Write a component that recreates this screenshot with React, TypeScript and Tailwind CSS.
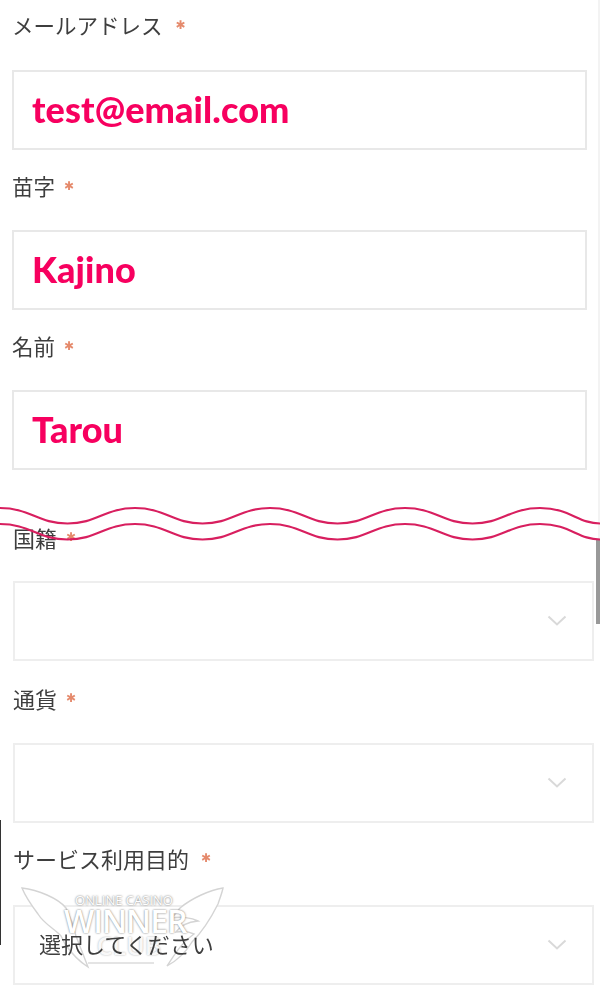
import React from "react";

const sans = "font-['Noto_Sans_CJK_JP','Noto_Sans',sans-serif]";

function Label({ text, box, gap, size }: { text: string; box: string; gap: string; size: string }) {
  return (
    <div className={box}>
      <div className={`flex items-center h-[32px] ${size} leading-[32px] text-[#3e3e3e] blur-[0.4px] ${gap}`}>
        <span>{text}</span>
        <span className="font-['DejaVu_Sans',sans-serif] text-[12px] leading-none font-bold text-[#e58a6c] blur-[0.3px]">✱</span>
      </div>
    </div>
  );
}

function TextBox({ value }: { value: string }) {
  return (
    <div className="h-[80px] border-2 border-[#e8e8e8] bg-white pl-[18px] pb-[2px] flex items-center">
      <span className="font-['Lato',sans-serif] text-[36px] font-black tracking-[0.1px] text-[#f7005f] blur-[0.3px]">{value}</span>
    </div>
  );
}

function SelectBox({ value }: { value?: string }) {
  return (
    <div className="relative h-[80px] border-2 border-[#eeeeee] bg-white pl-[24px] pr-[25px] flex items-center justify-between">
      <span className="relative z-10 -top-[2px] text-[22px] text-[#3e3e3e] blur-[0.4px]">{value}</span>
      <svg width="20" height="12" viewBox="0 0 20 12" fill="none" className="blur-[0.4px]">
        <path d="M1.5 1.5 L10 9.5 L18.5 1.5" stroke="#d9d9d9" strokeWidth="2" />
      </svg>
    </div>
  );
}

function Wave({ className }: { className: string }) {
  const d =
    "M0 2 C30 2 38 17.5 67.5 17.5 C97 17.5 105 2 135 2 C165 2 173 17.5 202.5 17.5 C232 17.5 240 2 270 2 C300 2 308 17.5 337.5 17.5 C367 17.5 375 2 405 2 C435 2 443 17.5 472.5 17.5 C502 17.5 510 2 540 2 C570 2 578 17.5 600 17.5";
  return (
    <svg width="600" height="20" viewBox="0 0 600 20" fill="none" className={className}>
      <path d={d} stroke="#d81f5f" strokeWidth="2.2" />
    </svg>
  );
}

function Logo() {
  return (
    <div className="absolute left-[20px] top-[884px] w-[208px] h-[86px] text-white pointer-events-none">
      <svg width="208" height="86" viewBox="0 0 208 86" className="absolute left-0 top-0 blur-[0.5px]" fill="#fff" stroke="#d4d4d4" strokeWidth="1.4">
        <path d="M2 4 C18 6 38 14 46 24 C50 32 54 44 56 52 L68 83 C60 78 52 70 45 60 L41 52 C36 46 24 40 18 30 C12 22 6 14 2 4 Z" />
        <path d="M203 4 C190 6 172 14 160 24 L152 34 C160 32 172 34 178 37 C168 38 160 42 156 48 C162 47 170 48 174 50 C162 58 155 70 147 82 C158 76 166 68 172 58 C184 46 192 32 198 20 C200 14 202 9 203 4 Z" />
      </svg>
      <div className="absolute left-[44px] top-[10px] w-[120px] text-center font-['Open_Sans',sans-serif] text-[13px] leading-none whitespace-nowrap text-white [text-shadow:0_0_2px_#555]">
        ONLINE CASINO
      </div>
      <div className="absolute left-[44px] top-[21px] w-[120px] text-center font-['Open_Sans',sans-serif] text-[32px] font-semibold leading-none tracking-[-1px] whitespace-nowrap text-white [text-shadow:0_0_2px_#666]">
        WINNER
      </div>
      <div className="absolute left-[64px] top-[49px] w-[90px] text-center font-['Open_Sans',sans-serif] text-[25px] font-semibold leading-none whitespace-nowrap text-white/90 [text-shadow:0_0_2px_#aaa]">
        CLUB
      </div>
      <div className="absolute left-[68px] top-[78px] w-[66px] h-[2px] bg-[#e4e4e4]" />
    </div>
  );
}

export default function App() {
  return (
    <div className={`relative w-[600px] h-[1000px] overflow-hidden bg-white ${sans}`}>
      <div className="pl-[12px] pr-[13px]">
        <Label text="メールアドレス" box="h-[70px] pt-[9px]" gap="gap-[13px]" size="text-[21.5px]" />
        <TextBox value="test@email.com" />
        <Label text="苗字" box="h-[80px] pt-[20px]" gap="gap-[9px]" size="text-[21.5px]" />
        <TextBox value="Kajino" />
        <Label text="名前" box="h-[80px] pt-[20px]" gap="gap-[9px]" size="text-[21.5px]" />
        <TextBox value="Tarou" />
      </div>
      <div className="pl-[13px] pr-[6px]">
        <Label text="国籍" box="h-[111px] pt-[51px]" gap="gap-[9px]" size="text-[22px]" />
        <SelectBox />
        <Label text="通貨" box="h-[82px] pt-[21px]" gap="gap-[9px]" size="text-[22px]" />
        <SelectBox />
        <Label text="サービス利用目的" box="h-[82px] pt-[19px]" gap="gap-[12px]" size="text-[22px]" />
        <SelectBox value="選択してください" />
      </div>
      <div className="absolute left-0 top-[820px] w-px h-[125px] bg-[#333]" />
      <div className="absolute right-0 top-0 w-[2px] h-[540px] bg-[#f3f3f3]" />
      <div className="absolute right-0 top-[540px] w-[4px] h-[84px] bg-[#999]" />
      <Logo />
      <Wave className="absolute left-0 top-[506px]" />
      <Wave className="absolute left-0 top-[521.5px]" />
    </div>
  );
}
